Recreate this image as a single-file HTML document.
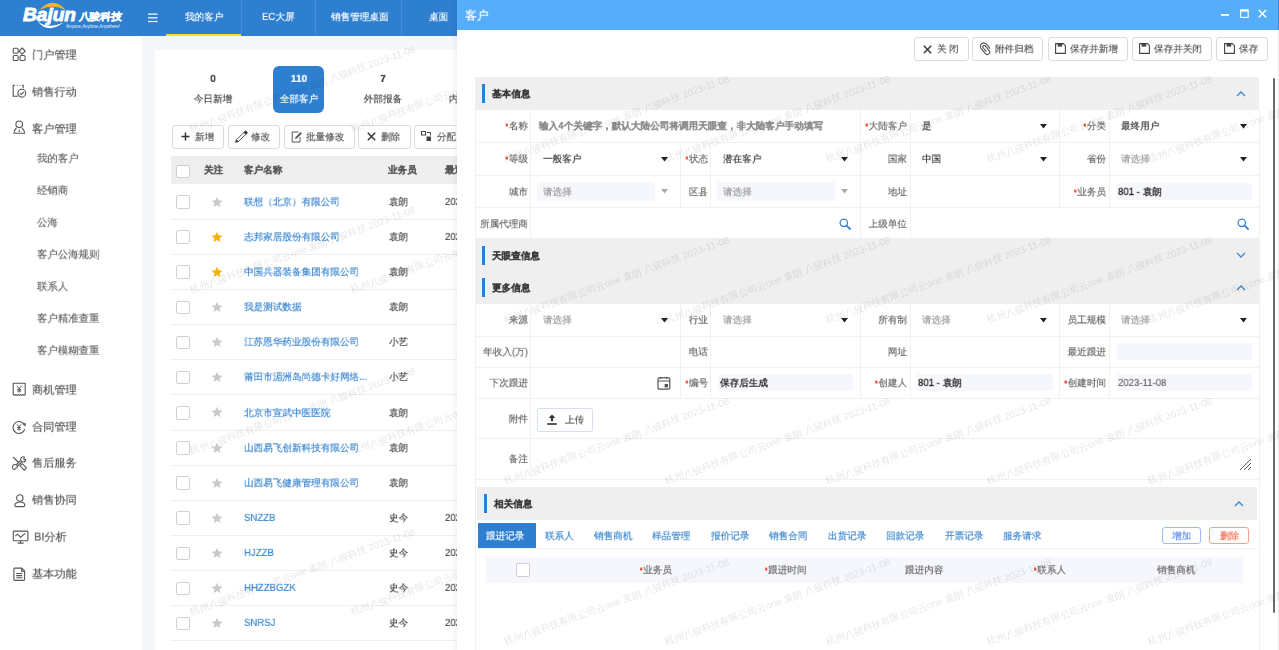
<!DOCTYPE html>
<html><head><meta charset="utf-8">
<style>
*{margin:0;padding:0;box-sizing:border-box;}
html,body{width:1279px;height:650px;overflow:hidden;background:#fff;font-family:"Liberation Sans",sans-serif;}
.a{position:absolute;}
.t{position:absolute;white-space:nowrap;line-height:1;transform:scale(0.8);transform-origin:0 0;will-change:transform;-webkit-text-stroke:0.2px currentColor;}
#hdr{left:0;top:0;width:457px;height:36px;background:#2f7fd1;}
#side{left:0;top:36px;width:142px;height:614px;background:#fff;}
#main{left:142px;top:36px;width:315px;height:614px;background:#f5f7fb;}
#card{left:155px;top:50px;width:310px;height:600px;background:#fff;}
.nav{color:#fff;font-size:12px;}
.sep{position:absolute;top:0;width:1px;height:34px;background:#4a8fd6;}
.mi{color:#555;font-size:14px;}
.si{color:#666;font-size:13px;}
.btn{position:absolute;border:1px solid #dcdcdc;border-radius:3px;background:#fff;height:24px;}
.btxt{color:#555;font-size:12px;}
.th{color:#555;font-size:12px;font-weight:bold;}
.cb{position:absolute;width:13.5px;height:13.5px;border:1px solid #d0d0d0;border-radius:2px;background:#fff;}
.rl{position:absolute;left:171px;width:290px;height:1px;background:#efefef;}
.nm{color:#3a86d0;font-size:12px;}
.us{color:#444;font-size:12px;}
#modal{left:457px;top:0;width:822px;height:650px;background:#fff;}
#mhdr{left:457px;top:0;width:822px;height:30px;background:#56aefb;}
.mb{position:absolute;top:37px;height:23.5px;border:1px solid #dcdcdc;border-radius:3px;background:#fff;}
.sec{position:absolute;left:475px;width:785px;height:32.5px;background:#efefef;}
.acc{position:absolute;width:3px;background:#2f7fd1;}
.stl{color:#333;font-size:12px;font-weight:bold;}
.hl{position:absolute;height:1px;background:#f1f1f1;}
.vl{position:absolute;width:1px;background:#f1f1f1;}
.lb{color:#666;font-size:12px;}
.req{color:#f5552f;}
.val{color:#333;font-size:12px;}
.ph{color:#999;font-size:12px;}
.ibox{position:absolute;background:#f5f7fc;border-radius:3px;}
.wm{position:absolute;white-space:nowrap;font-size:12px;line-height:1;color:rgba(0,0,0,0.11);transform-origin:0 100%;transform:translate(0,-100%) rotate(-19.8deg) scale(0.81);}
.dot{display:inline-block;width:3.3px;height:3.3px;border-radius:50%;background:#f4502a;vertical-align:top;margin-top:3.4px;margin-right:1px;}
</style></head><body>
<!-- main header -->
<div id="hdr" class="a"></div>
<div id="side" class="a"></div>
<div id="main" class="a"></div>
<div id="card" class="a"></div>


<!-- logo -->
<svg class="a" style="left:0;top:0" width="140" height="36" viewBox="0 0 140 36">
  <path d="M39.6 10 Q52.5 -4.5 66 10.2 Q53 3.1 39.6 10Z" fill="#f4b81a"/>
  <path d="M37.5 21.2 Q48 34.6 63.5 22.6 Q48.5 29.6 37.5 21.2Z" fill="#fff"/>
  <text x="23" y="20.6" font-family="Liberation Sans" font-weight="bold" font-style="italic" font-size="18.5" fill="#fff" stroke="#fff" stroke-width="0.9" textLength="53" lengthAdjust="spacingAndGlyphs">Bajun</text>
  <g transform="translate(78.5 19.8) skewX(-6)"><text x="0" y="0" font-size="10" font-weight="bold" fill="#fff" stroke="#fff" stroke-width="0.35" font-family="Liberation Sans,sans-serif" textLength="43" lengthAdjust="spacingAndGlyphs">八骏科技</text></g>
  <text x="66" y="28.2" font-size="4.6" fill="#e6f0ff" font-family="Liberation Sans" textLength="54" lengthAdjust="spacingAndGlyphs">Anyone,Anytime,Anywhere!</text>
</svg>
<svg class="a" style="left:148px;top:12.5px" width="10" height="10" viewBox="0 0 10 10"><rect x="0" y="0.5" width="9.5" height="1.2" fill="#fff"/><rect x="0" y="4.2" width="9.5" height="1.2" fill="#fff"/><rect x="0" y="7.9" width="9.5" height="1.2" fill="#fff"/></svg>
<div class="a" style="left:166px;top:34px;width:75px;height:2px;background:#f0e516"></div>
<div class="sep" style="left:241px"></div>
<div class="sep" style="left:315px"></div>
<div class="sep" style="left:401px"></div>
<div class="t nav" style="left:184.5px;top:12px">我的客户</div>
<div class="t nav" style="left:262px;top:12px">EC大屏</div>
<div class="t nav" style="left:331px;top:12px">销售管理桌面</div>
<div class="t nav" style="left:429px;top:12px">桌面</div>

<div class="t mi" style="left:31.5px;top:48.8px">门户管理</div>
<div class="t mi" style="left:31.5px;top:85.8px">销售行动</div>
<div class="t mi" style="left:31.5px;top:122.8px">客户管理</div>
<div class="t si" style="left:37px;top:153.1px">我的客户</div>
<div class="t si" style="left:37px;top:185.1px">经销商</div>
<div class="t si" style="left:37px;top:217.1px">公海</div>
<div class="t si" style="left:37px;top:249.1px">客户公海规则</div>
<div class="t si" style="left:37px;top:281.1px">联系人</div>
<div class="t si" style="left:37px;top:313.1px">客户精准查重</div>
<div class="t si" style="left:37px;top:345.1px">客户模糊查重</div>
<div class="t mi" style="left:31.5px;top:383.8px">商机管理</div>
<div class="t mi" style="left:31.5px;top:420.8px">合同管理</div>
<div class="t mi" style="left:31.5px;top:456.8px">售后服务</div>
<div class="t mi" style="left:31.5px;top:493.8px">销售协同</div>
<div class="t mi" style="left:33.5px;top:530.8px">BI分析</div>
<div class="t mi" style="left:31.5px;top:567.8px">基本功能</div>
<div class="a" style="left:273px;top:66px;width:51px;height:47px;background:#2f7fd1;border-radius:6px"></div>
<div class="t" style="transform-origin:50% 0;left:183.4px;width:60px;text-align:center;top:74.4px;font-size:12.6px;font-weight:bold;color:#333">0</div>
<div class="t" style="transform-origin:50% 0;left:183.4px;width:60px;text-align:center;top:93.5px;font-size:12px;color:#444">今日新增</div>
<div class="t" style="transform-origin:50% 0;left:268.5px;width:60px;text-align:center;top:74.4px;font-size:12.6px;font-weight:bold;color:#fff">110</div>
<div class="t" style="transform-origin:50% 0;left:268.5px;width:60px;text-align:center;top:93.5px;font-size:12px;color:#fff">全部客户</div>
<div class="t" style="transform-origin:50% 0;left:353.4px;width:60px;text-align:center;top:74.4px;font-size:12.6px;font-weight:bold;color:#333">7</div>
<div class="t" style="transform-origin:50% 0;left:353.4px;width:60px;text-align:center;top:93.5px;font-size:12px;color:#444">外部报备</div>
<div class="t" style="transform-origin:50% 0;left:438.3px;width:60px;text-align:center;top:74.4px;font-size:12.6px;font-weight:bold;color:#333">3</div>
<div class="t" style="transform-origin:50% 0;left:438.3px;width:60px;text-align:center;top:93.5px;font-size:12px;color:#444">内部报备</div>
<div class="btn" style="left:172px;top:125px;width:52px"></div>
<div class="btn" style="left:228px;top:125px;width:52px"></div>
<div class="btn" style="left:283.5px;top:125px;width:71px"></div>
<div class="btn" style="left:358px;top:125px;width:52.5px"></div>
<div class="btn" style="left:414px;top:125px;width:60px"></div>
<div class="t btxt" style="left:195px;top:131.5px">新增</div>
<div class="t btxt" style="left:250.5px;top:131.5px">修改</div>
<div class="t btxt" style="left:306px;top:131.5px">批量修改</div>
<div class="t btxt" style="left:381px;top:131.5px">删除</div>
<div class="t btxt" style="left:437px;top:131.5px">分配</div>
<svg class="a" style="left:181px;top:132px" width="9" height="9" viewBox="0 0 9 9"><path d="M4.5 0.5V8.5M0.5 4.5H8.5" stroke="#333" stroke-width="1.5"/></svg>
<svg class="a" style="left:234px;top:129px" width="15" height="15" viewBox="0 0 15 15"><path d="M4.09 12.72 L11.9 5.26 L10.1 3.38 L2.29 10.84Z" fill="#fff" stroke="#444" stroke-width="0.9" stroke-linejoin="round"/><path d="M11.9 5.26 L13.5 3.74 L11.7 1.86 L10.1 3.38Z" fill="#333" stroke="#333" stroke-width="0.9" stroke-linejoin="round"/><path d="M1.5 13.4 L4.09 12.72 L2.29 10.84Z" fill="#333" stroke="#333" stroke-width="0.6" stroke-linejoin="round"/></svg>
<svg class="a" style="left:291px;top:131px" width="12" height="12" viewBox="0 0 12 12"><path d="M7.5 1H1.2V11H9V6" fill="none" stroke="#555" stroke-width="1"/><path d="M4 8 L4.5 6.2 L9.6 1.1 L10.9 2.4 L5.8 7.5Z" fill="#555"/></svg>
<svg class="a" style="left:367px;top:132px" width="9" height="9" viewBox="0 0 9 9"><path d="M0.8 0.8L8.2 8.2M8.2 0.8L0.8 8.2" stroke="#333" stroke-width="1.4"/></svg>
<svg class="a" style="left:421px;top:131px" width="11" height="11" viewBox="0 0 11 11"><rect x="0.5" y="0.5" width="4" height="3.5" fill="none" stroke="#444" stroke-width="1"/><rect x="5.5" y="5.5" width="4.5" height="4.5" fill="#444"/><path d="M6 1.5H9.5V4.5" fill="none" stroke="#444" stroke-width="1"/></svg>
<div class="a" style="left:171px;top:156px;width:290px;height:28px;background:#eeeeee"></div>
<div class="cb" style="left:176px;top:164.5px"></div>
<div class="t th" style="left:203.5px;top:165px">关注</div>
<div class="t th" style="left:243.5px;top:165px">客户名称</div>
<div class="t th" style="left:388px;top:165px">业务员</div>
<div class="t th" style="left:444.5px;top:165px">最近跟进</div>
<div class="rl" style="top:218.60px"></div>
<div class="cb" style="left:176px;top:195.10px"></div>
<svg class="a" style="left:210.5px;top:195.50px" width="12" height="12" viewBox="0 0 24 24"><path d="M12 1.5l3.1 7.2 7.8.6-5.9 5.1 1.8 7.6L12 17.9l-6.8 4.1 1.8-7.6-5.9-5.1 7.8-.6z" fill="#c9c9c9"/></svg>
<div class="t nm" style="left:244px;top:196.60px">联想（北京）有限公司</div>
<div class="t us" style="left:388.5px;top:196.60px">袁朗</div>
<div class="t us" style="left:444.5px;top:196.60px">2023-11-08</div>
<div class="rl" style="top:253.75px"></div>
<div class="cb" style="left:176px;top:230.25px"></div>
<svg class="a" style="left:210.5px;top:230.65px" width="12" height="12" viewBox="0 0 24 24"><path d="M12 1.5l3.1 7.2 7.8.6-5.9 5.1 1.8 7.6L12 17.9l-6.8 4.1 1.8-7.6-5.9-5.1 7.8-.6z" fill="#f5b100"/></svg>
<div class="t nm" style="left:244px;top:231.75px">志邦家居股份有限公司</div>
<div class="t us" style="left:388.5px;top:231.75px">袁朗</div>
<div class="t us" style="left:444.5px;top:231.75px">2023-11-08</div>
<div class="rl" style="top:288.90px"></div>
<div class="cb" style="left:176px;top:265.40px"></div>
<svg class="a" style="left:210.5px;top:265.80px" width="12" height="12" viewBox="0 0 24 24"><path d="M12 1.5l3.1 7.2 7.8.6-5.9 5.1 1.8 7.6L12 17.9l-6.8 4.1 1.8-7.6-5.9-5.1 7.8-.6z" fill="#f5b100"/></svg>
<div class="t nm" style="left:244px;top:266.90px">中国兵器装备集团有限公司</div>
<div class="t us" style="left:388.5px;top:266.90px">袁朗</div>
<div class="rl" style="top:324.05px"></div>
<div class="cb" style="left:176px;top:300.55px"></div>
<svg class="a" style="left:210.5px;top:300.95px" width="12" height="12" viewBox="0 0 24 24"><path d="M12 1.5l3.1 7.2 7.8.6-5.9 5.1 1.8 7.6L12 17.9l-6.8 4.1 1.8-7.6-5.9-5.1 7.8-.6z" fill="#c9c9c9"/></svg>
<div class="t nm" style="left:244px;top:302.05px">我是测试数据</div>
<div class="t us" style="left:388.5px;top:302.05px">袁朗</div>
<div class="rl" style="top:359.20px"></div>
<div class="cb" style="left:176px;top:335.70px"></div>
<svg class="a" style="left:210.5px;top:336.10px" width="12" height="12" viewBox="0 0 24 24"><path d="M12 1.5l3.1 7.2 7.8.6-5.9 5.1 1.8 7.6L12 17.9l-6.8 4.1 1.8-7.6-5.9-5.1 7.8-.6z" fill="#c9c9c9"/></svg>
<div class="t nm" style="left:244px;top:337.20px">江苏恩华药业股份有限公司</div>
<div class="t us" style="left:388.5px;top:337.20px">小艺</div>
<div class="rl" style="top:394.35px"></div>
<div class="cb" style="left:176px;top:370.85px"></div>
<svg class="a" style="left:210.5px;top:371.25px" width="12" height="12" viewBox="0 0 24 24"><path d="M12 1.5l3.1 7.2 7.8.6-5.9 5.1 1.8 7.6L12 17.9l-6.8 4.1 1.8-7.6-5.9-5.1 7.8-.6z" fill="#c9c9c9"/></svg>
<div class="t nm" style="left:244px;top:372.35px">莆田市湄洲岛尚德卡好网络...</div>
<div class="t us" style="left:388.5px;top:372.35px">小艺</div>
<div class="rl" style="top:429.50px"></div>
<div class="cb" style="left:176px;top:406.00px"></div>
<svg class="a" style="left:210.5px;top:406.40px" width="12" height="12" viewBox="0 0 24 24"><path d="M12 1.5l3.1 7.2 7.8.6-5.9 5.1 1.8 7.6L12 17.9l-6.8 4.1 1.8-7.6-5.9-5.1 7.8-.6z" fill="#c9c9c9"/></svg>
<div class="t nm" style="left:244px;top:407.50px">北京市宣武中医医院</div>
<div class="t us" style="left:388.5px;top:407.50px">袁朗</div>
<div class="rl" style="top:464.65px"></div>
<div class="cb" style="left:176px;top:441.15px"></div>
<svg class="a" style="left:210.5px;top:441.55px" width="12" height="12" viewBox="0 0 24 24"><path d="M12 1.5l3.1 7.2 7.8.6-5.9 5.1 1.8 7.6L12 17.9l-6.8 4.1 1.8-7.6-5.9-5.1 7.8-.6z" fill="#c9c9c9"/></svg>
<div class="t nm" style="left:244px;top:442.65px">山西易飞创新科技有限公司</div>
<div class="t us" style="left:388.5px;top:442.65px">袁朗</div>
<div class="rl" style="top:499.80px"></div>
<div class="cb" style="left:176px;top:476.30px"></div>
<svg class="a" style="left:210.5px;top:476.70px" width="12" height="12" viewBox="0 0 24 24"><path d="M12 1.5l3.1 7.2 7.8.6-5.9 5.1 1.8 7.6L12 17.9l-6.8 4.1 1.8-7.6-5.9-5.1 7.8-.6z" fill="#c9c9c9"/></svg>
<div class="t nm" style="left:244px;top:477.80px">山西易飞健康管理有限公司</div>
<div class="t us" style="left:388.5px;top:477.80px">袁朗</div>
<div class="rl" style="top:534.95px"></div>
<div class="cb" style="left:176px;top:511.45px"></div>
<svg class="a" style="left:210.5px;top:511.85px" width="12" height="12" viewBox="0 0 24 24"><path d="M12 1.5l3.1 7.2 7.8.6-5.9 5.1 1.8 7.6L12 17.9l-6.8 4.1 1.8-7.6-5.9-5.1 7.8-.6z" fill="#c9c9c9"/></svg>
<div class="t nm" style="left:244px;top:512.95px">SNZZB</div>
<div class="t us" style="left:388.5px;top:512.95px">史今</div>
<div class="t us" style="left:444.5px;top:512.95px">2023-11-08</div>
<div class="rl" style="top:570.10px"></div>
<div class="cb" style="left:176px;top:546.60px"></div>
<svg class="a" style="left:210.5px;top:547.00px" width="12" height="12" viewBox="0 0 24 24"><path d="M12 1.5l3.1 7.2 7.8.6-5.9 5.1 1.8 7.6L12 17.9l-6.8 4.1 1.8-7.6-5.9-5.1 7.8-.6z" fill="#c9c9c9"/></svg>
<div class="t nm" style="left:244px;top:548.10px">HJZZB</div>
<div class="t us" style="left:388.5px;top:548.10px">史今</div>
<div class="t us" style="left:444.5px;top:548.10px">2023-11-08</div>
<div class="rl" style="top:605.25px"></div>
<div class="cb" style="left:176px;top:581.75px"></div>
<svg class="a" style="left:210.5px;top:582.15px" width="12" height="12" viewBox="0 0 24 24"><path d="M12 1.5l3.1 7.2 7.8.6-5.9 5.1 1.8 7.6L12 17.9l-6.8 4.1 1.8-7.6-5.9-5.1 7.8-.6z" fill="#c9c9c9"/></svg>
<div class="t nm" style="left:244px;top:583.25px">HHZZBGZK</div>
<div class="t us" style="left:388.5px;top:583.25px">史今</div>
<div class="t us" style="left:444.5px;top:583.25px">2023-11-08</div>
<div class="rl" style="top:640.40px"></div>
<div class="cb" style="left:176px;top:616.90px"></div>
<svg class="a" style="left:210.5px;top:617.30px" width="12" height="12" viewBox="0 0 24 24"><path d="M12 1.5l3.1 7.2 7.8.6-5.9 5.1 1.8 7.6L12 17.9l-6.8 4.1 1.8-7.6-5.9-5.1 7.8-.6z" fill="#c9c9c9"/></svg>
<div class="t nm" style="left:244px;top:618.40px">SNRSJ</div>
<div class="t us" style="left:388.5px;top:618.40px">史今</div>
<div class="t us" style="left:444.5px;top:618.40px">2023-11-08</div>

<svg class="a" style="left:12px;top:47px" width="15" height="15" viewBox="0 0 15 15">
 <rect x="1.2" y="1.3" width="5" height="5" rx="1.3" fill="none" stroke="#555" stroke-width="1.1"/>
 <rect x="1.2" y="8.5" width="5" height="5" rx="1.3" fill="none" stroke="#555" stroke-width="1.1"/>
 <rect x="8.1" y="8.5" width="5" height="5" rx="1.3" fill="none" stroke="#555" stroke-width="1.1"/>
 <path d="M10.2 1 L13.3 4.1 L10.2 7.2 L7.1 4.1Z" fill="none" stroke="#555" stroke-width="1.1" stroke-linejoin="round"/>
</svg>
<svg class="a" style="left:12px;top:84px" width="15" height="15" viewBox="0 0 15 15">
 <path d="M6 12.2 H1.2 V1.3 H3" fill="none" stroke="#555" stroke-width="1.1"/>
 <path d="M4.7 1.3H5.6M7.3 1.3H8.2" fill="none" stroke="#555" stroke-width="1.1"/>
 <path d="M9.9 1.3 H11.2 V4.2" fill="none" stroke="#555" stroke-width="1.1"/>
 <circle cx="9.8" cy="9.2" r="3.9" fill="none" stroke="#555" stroke-width="1.1"/>
 <path d="M7.9 9.3 L9.3 10.6 L11.8 8" fill="none" stroke="#555" stroke-width="1.1"/>
</svg>
<svg class="a" style="left:13px;top:120px" width="13" height="15" viewBox="0 0 13 15">
 <circle cx="6.2" cy="4.3" r="3.3" fill="none" stroke="#555" stroke-width="1.1"/>
 <path d="M3.4 8 Q1 10 0.9 13.3 H11.6 Q11.4 10 9 8" fill="none" stroke="#555" stroke-width="1.1"/>
 <path d="M6.2 8.6 L5.6 11.5 L6.2 12.5 L6.8 11.5Z" fill="#555"/>
</svg>
<svg class="a" style="left:12px;top:382px" width="15" height="15" viewBox="0 0 15 15">
 <path d="M1.2 12.5 V1.2 H13.2 V12.5 L12 13.4 L10.8 12.5 L9.6 13.4 L8.4 12.5 L7.2 13.4 L6 12.5 L4.8 13.4 L3.6 12.5 L2.4 13.4Z" fill="none" stroke="#555" stroke-width="1.1" stroke-linejoin="round"/>
 <path d="M4.8 3.8 L7.2 6.6 L9.6 3.8 M7.2 6.6 V10.6 M5.2 7.4 H9.2 M5.2 9 H9.2" fill="none" stroke="#555" stroke-width="1"/>
</svg>
<svg class="a" style="left:12px;top:419.5px" width="15" height="15" viewBox="0 0 15 15">
 <path d="M12.6 5.2 A6 6 0 1 0 12.8 9.2" fill="none" stroke="#555" stroke-width="1.1"/>
 <path d="M11 3.9 L13.4 5.8 L13.3 3" fill="#555" stroke="#555" stroke-width="0.8"/>
 <path d="M4.9 4.4 L7 6.9 L9.1 4.4 M7 6.9 V10.6 M5.2 7.5 H8.8 M5.2 9.1 H8.8" fill="none" stroke="#555" stroke-width="1"/>
</svg>
<svg class="a" style="left:12px;top:456px" width="15" height="15" viewBox="0 0 15 15">
 <path d="M1.4 1.4 L7.4 7.2" stroke="#555" stroke-width="1.3" stroke-linecap="round"/>
 <path d="M10.14 7.72 L8.02 9.84 L12.26 14.08 L14.38 11.96Z" fill="none" stroke="#555" stroke-width="1.05" stroke-linejoin="round"/>
 <path d="M9.3 5 L4.9 9.4" stroke="#555" stroke-width="2.9"/>
 <path d="M9.3 5 L4.9 9.4" stroke="#fff" stroke-width="0.9"/>
 <path d="M12.6 1.2 A2.6 2.6 0 1 0 13.8 3.6 L12.2 3.8 L11.7 2.9 Z" fill="none" stroke="#555" stroke-width="1.05" stroke-linejoin="round"/>
 <path d="M2.3 13.6 A2.6 2.6 0 1 1 5.6 10.9 L4.6 11.5 L3.7 12.4 Z" fill="none" stroke="#555" stroke-width="1.05" stroke-linejoin="round"/>
</svg>
<svg class="a" style="left:13.5px;top:493.5px" width="12" height="14" viewBox="0 0 12 14">
 <circle cx="5.8" cy="4" r="3.2" fill="none" stroke="#555" stroke-width="1.1"/>
 <path d="M5.8 8 C2.8 8 0.8 9.4 0.8 11.4 C0.8 12.5 1.4 12.6 2.4 12.6 H9.2 C10.2 12.6 10.8 12.5 10.8 11.4 C10.8 9.4 8.8 8 5.8 8Z" fill="none" stroke="#555" stroke-width="1.1"/>
</svg>
<svg class="a" style="left:12px;top:530px" width="18" height="15" viewBox="0 0 18 15">
 <rect x="1.3" y="1.1" width="14.6" height="9.6" rx="0.8" fill="none" stroke="#555" stroke-width="1.1"/>
 <path d="M3.2 6.2 L5.6 4.2 L8.6 7.2 L13.2 3.4" fill="none" stroke="#555" stroke-width="1.1"/>
 <path d="M8.6 10.7 V12.6 M5.6 13.1 H11.6" fill="none" stroke="#555" stroke-width="1.1"/>
</svg>
<svg class="a" style="left:13px;top:566.5px" width="13" height="15" viewBox="0 0 13 15">
 <path d="M1.8 1.1 H8.8 L11.6 3.9 V12.5 Q11.6 13.4 10.7 13.4 H1.8 Q0.9 13.4 0.9 12.5 V2 Q0.9 1.1 1.8 1.1Z" fill="none" stroke="#555" stroke-width="1.1" stroke-linejoin="round"/>
 <path d="M8.6 1.3 V4.1 H11.4" fill="none" stroke="#555" stroke-width="1.1"/>
 <path d="M3.2 6.5 H9.3 M3.2 8.6 H9.3 M3.2 10.7 H9.3" fill="none" stroke="#555" stroke-width="1.1"/>
</svg>

<!-- modal -->
<div class="a" style="left:451px;top:0;width:6px;height:650px;background:linear-gradient(to right,rgba(0,0,0,0),rgba(0,0,0,0.045))"></div>
<div id="modal" class="a"></div>
<div id="mhdr" class="a"></div>
<div class="t" style="left:465px;top:8.5px;color:#fff;font-size:15px;">客户</div>

<svg class="a" style="left:1218px;top:6px" width="56" height="16" viewBox="0 0 56 16"><rect x="3" y="8" width="8" height="1.8" fill="#fff"/><rect x="22.6" y="3.8" width="7.6" height="7.6" fill="none" stroke="#fff" stroke-width="1.1"/><rect x="22.6" y="3.8" width="7.6" height="1.8" fill="#fff"/><path d="M40.8 4L48 11.2M48 4L40.8 11.2" stroke="#fff" stroke-width="1.5"/></svg><div class="a" style="left:1278px;top:0;width:1px;height:30px;background:#3a8ad8"></div><div class="a" style="left:1278px;top:30px;width:1px;height:620px;background:#ececec"></div>
<div class="mb" style="left:914.4px;width:54.6px"></div>
<div class="mb" style="left:972.3px;width:71.2px"></div>
<div class="mb" style="left:1047.5px;width:80.4px"></div>
<div class="mb" style="left:1131.6px;width:80.7px"></div>
<div class="mb" style="left:1216.3px;width:52.1px"></div>
<svg class="a" style="left:923px;top:44.5px" width="9" height="9" viewBox="0 0 9 9"><path d="M0.8 0.8L8.2 8.2M8.2 0.8L0.8 8.2" stroke="#333" stroke-width="1.4"/></svg>
<div class="t btxt" style="left:936.5px;top:43.5px">关&nbsp;闭</div>
<svg class="a" style="left:978.5px;top:42px" width="14" height="14" viewBox="0 0 14 14"><g transform="rotate(-40 7 7)"><path d="M5.6 9.2 V4.2 a1.4 1.4 0 0 1 2.8 0 V10.2 a2.4 2.4 0 0 1 -4.8 0 V3.6 a3.4 3.4 0 0 1 6.8 0 V9.4" fill="none" stroke="#555" stroke-width="1.15"/></g></svg>
<div class="t btxt" style="left:995px;top:43.5px">附件归档</div>
<svg class="a" style="left:1054.5px;top:42.5px" width="11" height="11" viewBox="0 0 11 11"><path d="M0.6 0.6H8.3L10.4 2.7V10.4H0.6Z" fill="none" stroke="#444" stroke-width="1.1"/><rect x="2.6" y="0.6" width="4.6" height="3" fill="#444"/></svg>
<div class="t btxt" style="left:1070px;top:43.5px">保存并新增</div>
<svg class="a" style="left:1138.5px;top:42.5px" width="11" height="11" viewBox="0 0 11 11"><path d="M0.6 0.6H8.3L10.4 2.7V10.4H0.6Z" fill="none" stroke="#444" stroke-width="1.1"/><rect x="2.6" y="0.6" width="4.6" height="3" fill="#444"/></svg>
<div class="t btxt" style="left:1154px;top:43.5px">保存并关闭</div>
<svg class="a" style="left:1223.5px;top:42.5px" width="11" height="11" viewBox="0 0 11 11"><path d="M0.6 0.6H8.3L10.4 2.7V10.4H0.6Z" fill="none" stroke="#444" stroke-width="1.1"/><rect x="2.6" y="0.6" width="4.6" height="3" fill="#444"/></svg>
<div class="t btxt" style="left:1239px;top:43.5px">保存</div>
<div class="a" style="left:1273px;top:78px;width:2.2px;height:535px;background:#6b6b6b;border-radius:1px"></div>
<div class="vl" style="left:475px;top:479.2px;height:171px"></div>
<div class="vl" style="left:1259px;top:479.2px;height:171px"></div>
<div class="sec" style="left:475px;top:77px;width:784px;height:33px"></div>
<div class="acc" style="left:482.10px;top:84.00px;height:19px"></div>
<div class="t stl" style="left:491.90px;top:89.10px">基本信息</div>
<svg class="a" style="left:1235.50px;top:90.50px" width="10" height="6" viewBox="0 0 10 6"><path d="M1 5L5 1L9 5" fill="none" stroke="#3a86d0" stroke-width="1.3"/></svg>
<div class="hl" style="left:475.3px;top:142px;width:783.70px"></div>
<div class="hl" style="left:475.3px;top:175px;width:783.70px"></div>
<div class="hl" style="left:475.3px;top:207px;width:783.70px"></div>
<div class="vl" style="left:475px;top:110.00px;height:369.20px"></div>
<div class="vl" style="left:1259px;top:110.00px;height:369.20px"></div>
<div class="vl" style="left:530px;top:110.00px;height:128.60px"></div>
<div class="vl" style="left:680px;top:142.50px;height:65.50px"></div>
<div class="vl" style="left:710px;top:142.50px;height:65.50px"></div>
<div class="vl" style="left:860px;top:110.00px;height:128.60px"></div>
<div class="vl" style="left:910px;top:110.00px;height:128.60px"></div>
<div class="vl" style="left:1059px;top:110.00px;height:98.00px"></div>
<div class="vl" style="left:1109px;top:110.00px;height:98.00px"></div>
<div class="t lb" style="transform-origin:100% 0;right:751.00px;top:121.30px"><span class="dot"></span>名称</div>
<div class="t ph" style="left:538.80px;top:121.30px;color:#8a8a8a;font-weight:bold">输入4个关键字，默认大陆公司将调用天眼查，非大陆客户手动填写</div>
<div class="t lb" style="transform-origin:100% 0;right:372.00px;top:121.30px"><span class="dot"></span>大陆客户</div>
<div class="t val" style="left:922.00px;top:121.30px;">是</div>
<svg class="a" style="left:1040.00px;top:123.80px" width="7" height="5" viewBox="0 0 7 5"><path d="M0 0H7L3.5 4.6Z" fill="#222"/></svg>
<div class="t lb" style="transform-origin:100% 0;right:172.70px;top:121.30px"><span class="dot"></span>分类</div>
<div class="t val" style="left:1121.20px;top:121.30px;">最终用户</div>
<svg class="a" style="left:1239.50px;top:123.80px" width="7" height="5" viewBox="0 0 7 5"><path d="M0 0H7L3.5 4.6Z" fill="#222"/></svg>
<div class="t lb" style="transform-origin:100% 0;right:751.00px;top:154.00px"><span class="dot"></span>等级</div>
<div class="t val" style="left:543.20px;top:154.00px;">一般客户</div>
<svg class="a" style="left:661.10px;top:156.50px" width="7" height="5" viewBox="0 0 7 5"><path d="M0 0H7L3.5 4.6Z" fill="#222"/></svg>
<div class="t lb" style="transform-origin:100% 0;right:571.20px;top:154.00px"><span class="dot"></span>状态</div>
<div class="t val" style="left:723.30px;top:154.00px;">潜在客户</div>
<svg class="a" style="left:841.10px;top:156.50px" width="7" height="5" viewBox="0 0 7 5"><path d="M0 0H7L3.5 4.6Z" fill="#222"/></svg>
<div class="t lb" style="transform-origin:100% 0;right:372.00px;top:154.00px">国家</div>
<div class="t val" style="left:922.00px;top:154.00px;">中国</div>
<svg class="a" style="left:1040.00px;top:156.50px" width="7" height="5" viewBox="0 0 7 5"><path d="M0 0H7L3.5 4.6Z" fill="#222"/></svg>
<div class="t lb" style="transform-origin:100% 0;right:172.70px;top:154.00px">省份</div>
<div class="t ph" style="left:1121.20px;top:154.00px;">请选择</div>
<svg class="a" style="left:1239.50px;top:156.50px" width="7" height="5" viewBox="0 0 7 5"><path d="M0 0H7L3.5 4.6Z" fill="#222"/></svg>
<div class="t lb" style="transform-origin:100% 0;right:751.00px;top:186.50px">城市</div>
<div class="ibox" style="left:537.20px;top:182.20px;width:117.60px;height:18.80px"></div>
<div class="t ph" style="left:543.20px;top:186.50px;">请选择</div>
<svg class="a" style="left:661.10px;top:189.00px" width="7" height="5" viewBox="0 0 7 5"><path d="M0 0H7L3.5 4.6Z" fill="#aaa"/></svg>
<div class="t lb" style="transform-origin:100% 0;right:571.20px;top:186.50px">区县</div>
<div class="ibox" style="left:717.20px;top:182.00px;width:117.40px;height:19.00px"></div>
<div class="t ph" style="left:723.30px;top:186.50px;">请选择</div>
<svg class="a" style="left:841.10px;top:189.00px" width="7" height="5" viewBox="0 0 7 5"><path d="M0 0H7L3.5 4.6Z" fill="#aaa"/></svg>
<div class="t lb" style="transform-origin:100% 0;right:372.00px;top:186.50px">地址</div>
<div class="t lb" style="transform-origin:100% 0;right:172.70px;top:186.50px"><span class="dot"></span>业务员</div>
<div class="ibox" style="left:1116.20px;top:183.00px;width:136.20px;height:17.20px"></div>
<div class="t val" style="left:1117.60px;top:186.50px;color:#1e1e1e;-webkit-text-stroke:0.35px #1e1e1e">801 - 袁朗</div>
<div class="t lb" style="transform-origin:100% 0;right:751.00px;top:218.50px">所属代理商</div>
<svg class="a" style="left:838.50px;top:218.00px" width="12" height="12" viewBox="0 0 12 12"><circle cx="4.8" cy="4.8" r="3.7" fill="none" stroke="#3a86d0" stroke-width="1.3"/><path d="M7.6 7.6L11 11" stroke="#3a86d0" stroke-width="1.8" stroke-linecap="round"/></svg>
<div class="t lb" style="transform-origin:100% 0;right:372.00px;top:218.50px">上级单位</div>
<svg class="a" style="left:1237.00px;top:218.00px" width="12" height="12" viewBox="0 0 12 12"><circle cx="4.8" cy="4.8" r="3.7" fill="none" stroke="#3a86d0" stroke-width="1.3"/><path d="M7.6 7.6L11 11" stroke="#3a86d0" stroke-width="1.8" stroke-linecap="round"/></svg>
<div class="sec" style="left:475px;top:238px;width:784px;height:33px"></div>
<div class="acc" style="left:482.10px;top:245.60px;height:19px"></div>
<div class="t stl" style="left:491.90px;top:250.70px">天眼查信息</div>
<svg class="a" style="left:1235.50px;top:252.10px" width="10" height="6" viewBox="0 0 10 6"><path d="M1 1L5 5L9 1" fill="none" stroke="#3a86d0" stroke-width="1.3"/></svg>
<div class="sec" style="left:475px;top:271px;width:784px;height:33px"></div>
<div class="acc" style="left:482.10px;top:278.10px;height:19px"></div>
<div class="t stl" style="left:491.90px;top:283.20px">更多信息</div>
<svg class="a" style="left:1235.50px;top:284.60px" width="10" height="6" viewBox="0 0 10 6"><path d="M1 5L5 1L9 5" fill="none" stroke="#3a86d0" stroke-width="1.3"/></svg>
<div class="hl" style="left:475.3px;top:336px;width:783.70px"></div>
<div class="hl" style="left:475.3px;top:367px;width:783.70px"></div>
<div class="hl" style="left:475.3px;top:398px;width:783.70px"></div>
<div class="hl" style="left:475.3px;top:438px;width:783.70px"></div>
<div class="hl" style="left:475.3px;top:479px;width:783.70px"></div>
<div class="vl" style="left:530px;top:303.50px;height:175.70px"></div>
<div class="vl" style="left:680px;top:303.50px;height:94.80px"></div>
<div class="vl" style="left:710px;top:303.50px;height:94.80px"></div>
<div class="vl" style="left:860px;top:303.50px;height:94.80px"></div>
<div class="vl" style="left:910px;top:303.50px;height:94.80px"></div>
<div class="vl" style="left:1059px;top:303.50px;height:94.80px"></div>
<div class="vl" style="left:1109px;top:303.50px;height:94.80px"></div>
<div class="t lb" style="transform-origin:100% 0;right:751.00px;top:315.00px">来源</div>
<div class="t ph" style="left:543.20px;top:315.00px;">请选择</div>
<svg class="a" style="left:661.10px;top:317.50px" width="7" height="5" viewBox="0 0 7 5"><path d="M0 0H7L3.5 4.6Z" fill="#222"/></svg>
<div class="t lb" style="transform-origin:100% 0;right:571.20px;top:315.00px">行业</div>
<div class="t ph" style="left:723.30px;top:315.00px;">请选择</div>
<svg class="a" style="left:841.10px;top:317.50px" width="7" height="5" viewBox="0 0 7 5"><path d="M0 0H7L3.5 4.6Z" fill="#222"/></svg>
<div class="t lb" style="transform-origin:100% 0;right:372.00px;top:315.00px">所有制</div>
<div class="t ph" style="left:922.40px;top:315.00px;">请选择</div>
<svg class="a" style="left:1040.00px;top:317.50px" width="7" height="5" viewBox="0 0 7 5"><path d="M0 0H7L3.5 4.6Z" fill="#222"/></svg>
<div class="t lb" style="transform-origin:100% 0;right:172.70px;top:315.00px">员工规模</div>
<div class="t ph" style="left:1121.20px;top:315.00px;">请选择</div>
<svg class="a" style="left:1239.50px;top:317.50px" width="7" height="5" viewBox="0 0 7 5"><path d="M0 0H7L3.5 4.6Z" fill="#222"/></svg>
<div class="t lb" style="transform-origin:100% 0;right:751.00px;top:347.00px">年收入(万)</div>
<div class="t lb" style="transform-origin:100% 0;right:571.20px;top:347.00px">电话</div>
<div class="t lb" style="transform-origin:100% 0;right:372.00px;top:347.00px">网址</div>
<div class="t lb" style="transform-origin:100% 0;right:172.70px;top:347.00px">最近跟进</div>
<div class="ibox" style="left:1116.50px;top:343.30px;width:135.90px;height:16.70px"></div>
<div class="t lb" style="transform-origin:100% 0;right:751.00px;top:377.80px">下次跟进</div>
<svg class="a" style="left:657px;top:376px" width="14" height="14" viewBox="0 0 14 14"><rect x="1" y="1.8" width="11.8" height="11.4" rx="1.2" fill="none" stroke="#555" stroke-width="1.2"/><path d="M1 5H12.8" stroke="#555" stroke-width="1"/><circle cx="3.8" cy="1.8" r="0.9" fill="#555"/><circle cx="10" cy="1.8" r="0.9" fill="#555"/><rect x="7.6" y="8" width="3.4" height="3.4" fill="#555"/></svg>
<div class="t lb" style="transform-origin:100% 0;right:571.20px;top:377.80px"><span class="dot"></span>编号</div>
<div class="ibox" style="left:717.90px;top:374.20px;width:135.60px;height:16.80px"></div>
<div class="t val" style="left:719.50px;top:377.80px;color:#1e1e1e;-webkit-text-stroke:0.35px #1e1e1e">保存后生成</div>
<div class="t lb" style="transform-origin:100% 0;right:372.00px;top:377.80px"><span class="dot"></span>创建人</div>
<div class="ibox" style="left:916.70px;top:374.20px;width:136.80px;height:16.80px"></div>
<div class="t val" style="left:918.30px;top:377.80px;color:#1e1e1e;-webkit-text-stroke:0.35px #1e1e1e">801 - 袁朗</div>
<div class="t lb" style="transform-origin:100% 0;right:172.70px;top:377.80px"><span class="dot"></span>创建时间</div>
<div class="ibox" style="left:1116.50px;top:374.20px;width:135.90px;height:16.80px"></div>
<div class="t val" style="left:1117.90px;top:377.80px;color:#666">2023-11-08</div>
<div class="t lb" style="transform-origin:100% 0;right:751.00px;top:413.50px">附件</div>
<div class="a" style="left:537px;top:408px;width:56px;height:24px;border:1px solid #d5deea;border-radius:2px;background:#fff"></div>
<svg class="a" style="left:546px;top:412.5px" width="12" height="13" viewBox="0 0 12 13"><path d="M6 1.5L2.6 5H4.9V8.2H7.1V5H9.4Z" fill="#333"/><rect x="1.2" y="10.2" width="9.6" height="1.6" fill="#333"/></svg>
<div class="t val" style="left:565.00px;top:415.00px;color:#555">上传</div>
<div class="t lb" style="transform-origin:100% 0;right:751.00px;top:453.50px">备注</div>
<svg class="a" style="left:1238px;top:457px" width="14" height="14" viewBox="0 0 14 14"><path d="M2 13L13 2M6 13L13 6M10 13L13 10" stroke="#555" stroke-width="1"/></svg>
<div class="sec" style="left:477px;top:487px;width:780px;height:33px"></div>
<div class="acc" style="left:483.80px;top:494.30px;height:19px"></div>
<div class="t stl" style="left:493.60px;top:499.40px">相关信息</div>
<svg class="a" style="left:1233.50px;top:500.80px" width="10" height="6" viewBox="0 0 10 6"><path d="M1 5L5 1L9 5" fill="none" stroke="#3a86d0" stroke-width="1.3"/></svg>
<div class="a" style="left:478.2px;top:522.5px;width:58.3px;height:25.7px;background:#2f7fd1"></div>
<div class="hl" style="left:477px;top:548px;width:780.00px"></div>
<div class="t val" style="left:486.30px;top:530.50px;color:#fff">跟进记录</div>
<div class="t val" style="left:544.50px;top:530.50px;color:#3a86d0">联系人</div>
<div class="t val" style="left:593.80px;top:530.50px;color:#3a86d0">销售商机</div>
<div class="t val" style="left:652.00px;top:530.50px;color:#3a86d0">样品管理</div>
<div class="t val" style="left:710.80px;top:530.50px;color:#3a86d0">报价记录</div>
<div class="t val" style="left:769.30px;top:530.50px;color:#3a86d0">销售合同</div>
<div class="t val" style="left:828.00px;top:530.50px;color:#3a86d0">出货记录</div>
<div class="t val" style="left:886.30px;top:530.50px;color:#3a86d0">回款记录</div>
<div class="t val" style="left:944.50px;top:530.50px;color:#3a86d0">开票记录</div>
<div class="t val" style="left:1003.30px;top:530.50px;color:#3a86d0">服务请求</div>
<div class="a" style="left:1161.5px;top:527.1px;width:39.3px;height:17.4px;border:1px solid #9db8f2;border-radius:3px"></div>
<div class="a" style="left:1209.2px;top:527.1px;width:39.6px;height:17.4px;border:1px solid #f7a08c;border-radius:3px"></div>
<div class="t val" style="left:1171.50px;top:530.80px;color:#5a8de6">增加</div>
<div class="t val" style="left:1219.50px;top:530.80px;color:#f2714f">删除</div>
<div class="a" style="left:486.3px;top:557px;width:757px;height:26.2px;background:#f5f7fc"></div>
<div class="cb" style="left:516.2px;top:563.2px"></div>
<div class="t lb" style="left:639.5px;top:565px"><span class="dot"></span>业务员</div>
<div class="t lb" style="left:765.3px;top:565px"><span class="dot"></span>跟进时间</div>
<div class="t lb" style="left:905px;top:565px">跟进内容</div>
<div class="t lb" style="left:1034px;top:565px"><span class="dot"></span>联系人</div>
<div class="t lb" style="left:1157.4px;top:565px">销售商机</div>
<div class="a" style="left:142px;top:36px;width:315px;height:614px;overflow:hidden;pointer-events:none">
<div class="wm" style="left:50.3px;top:98.4px">杭州八骏科技有限公司云one 袁朗 八骏科技 2023-11-08</div>
<div class="wm" style="left:50.3px;top:259.4px">杭州八骏科技有限公司云one 袁朗 八骏科技 2023-11-08</div>
<div class="wm" style="left:50.3px;top:420.4px">杭州八骏科技有限公司云one 袁朗 八骏科技 2023-11-08</div>
<div class="wm" style="left:50.3px;top:581.4px">杭州八骏科技有限公司云one 袁朗 八骏科技 2023-11-08</div>
<div class="wm" style="left:211.3px;top:98.4px">杭州八骏科技有限公司云one 袁朗 八骏科技 2023-11-08</div>
<div class="wm" style="left:211.3px;top:259.4px">杭州八骏科技有限公司云one 袁朗 八骏科技 2023-11-08</div>
<div class="wm" style="left:211.3px;top:420.4px">杭州八骏科技有限公司云one 袁朗 八骏科技 2023-11-08</div>
<div class="wm" style="left:211.3px;top:581.4px">杭州八骏科技有限公司云one 袁朗 八骏科技 2023-11-08</div>
</div>
<div class="a" style="left:457px;top:30px;width:822px;height:620px;overflow:hidden;pointer-events:none">
<div class="wm" style="left:48.8px;top:133.9px">杭州八骏科技有限公司云one 袁朗 八骏科技 2023-11-08</div>
<div class="wm" style="left:48.8px;top:294.9px">杭州八骏科技有限公司云one 袁朗 八骏科技 2023-11-08</div>
<div class="wm" style="left:48.8px;top:455.9px">杭州八骏科技有限公司云one 袁朗 八骏科技 2023-11-08</div>
<div class="wm" style="left:48.8px;top:616.9px">杭州八骏科技有限公司云one 袁朗 八骏科技 2023-11-08</div>
<div class="wm" style="left:209.8px;top:133.9px">杭州八骏科技有限公司云one 袁朗 八骏科技 2023-11-08</div>
<div class="wm" style="left:209.8px;top:294.9px">杭州八骏科技有限公司云one 袁朗 八骏科技 2023-11-08</div>
<div class="wm" style="left:209.8px;top:455.9px">杭州八骏科技有限公司云one 袁朗 八骏科技 2023-11-08</div>
<div class="wm" style="left:209.8px;top:616.9px">杭州八骏科技有限公司云one 袁朗 八骏科技 2023-11-08</div>
<div class="wm" style="left:370.8px;top:133.9px">杭州八骏科技有限公司云one 袁朗 八骏科技 2023-11-08</div>
<div class="wm" style="left:370.8px;top:294.9px">杭州八骏科技有限公司云one 袁朗 八骏科技 2023-11-08</div>
<div class="wm" style="left:370.8px;top:455.9px">杭州八骏科技有限公司云one 袁朗 八骏科技 2023-11-08</div>
<div class="wm" style="left:370.8px;top:616.9px">杭州八骏科技有限公司云one 袁朗 八骏科技 2023-11-08</div>
<div class="wm" style="left:531.8px;top:133.9px">杭州八骏科技有限公司云one 袁朗 八骏科技 2023-11-08</div>
<div class="wm" style="left:531.8px;top:294.9px">杭州八骏科技有限公司云one 袁朗 八骏科技 2023-11-08</div>
<div class="wm" style="left:531.8px;top:455.9px">杭州八骏科技有限公司云one 袁朗 八骏科技 2023-11-08</div>
<div class="wm" style="left:531.8px;top:616.9px">杭州八骏科技有限公司云one 袁朗 八骏科技 2023-11-08</div>
<div class="wm" style="left:692.8px;top:133.9px">杭州八骏科技有限公司云one 袁朗 八骏科技 2023-11-08</div>
<div class="wm" style="left:692.8px;top:294.9px">杭州八骏科技有限公司云one 袁朗 八骏科技 2023-11-08</div>
<div class="wm" style="left:692.8px;top:455.9px">杭州八骏科技有限公司云one 袁朗 八骏科技 2023-11-08</div>
<div class="wm" style="left:692.8px;top:616.9px">杭州八骏科技有限公司云one 袁朗 八骏科技 2023-11-08</div>
</div>
</body></html>
